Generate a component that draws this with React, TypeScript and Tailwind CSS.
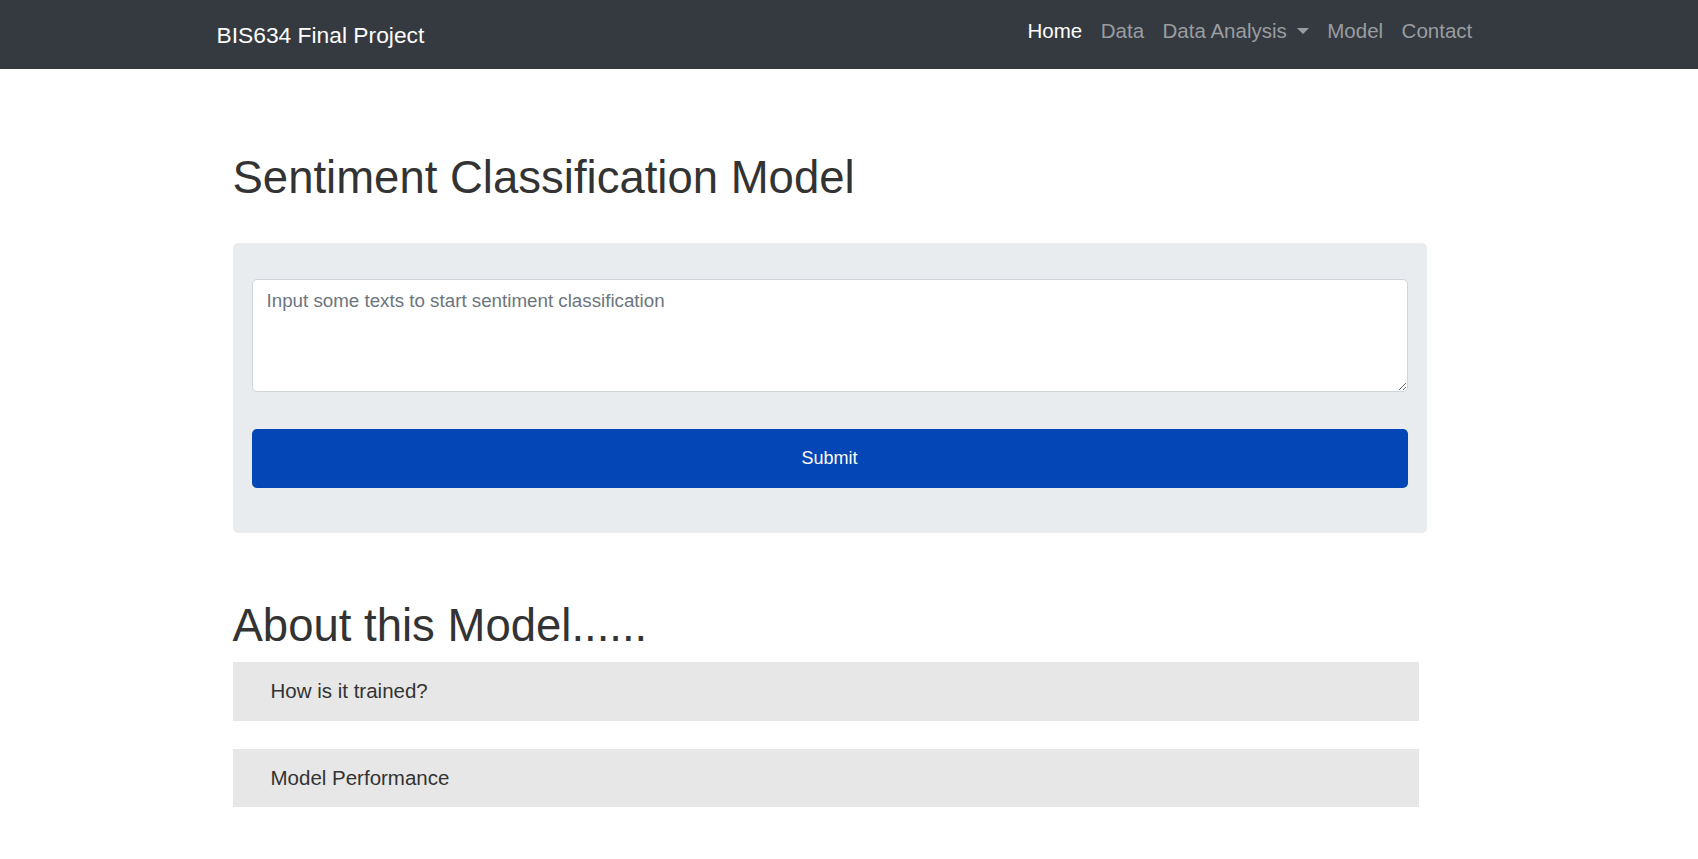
import React from "react";

const navLinks = [
  { label: "Home", active: true },
  { label: "Data" },
  { label: "Data Analysis", dropdown: true },
  { label: "Model" },
  { label: "Contact" },
];

function Navbar() {
  return (
    <nav className="h-[69px] bg-[#343a40]">
      <div className="mx-auto flex h-full w-[1297px] items-center justify-between px-4">
        <a href="#" className="pt-[2px] text-[22.8px] leading-none text-white">
          BIS634 Final Project
        </a>
        <ul className="flex items-center pb-[6px] text-[20.5px] leading-none">
          {navLinks.map((link) => (
            <li key={link.label}>
              <a
                href="#"
                className={
                  link.active
                    ? "flex items-center px-[9.25px] text-white"
                    : "flex items-center px-[9.25px] text-[#9a9da0]"
                }
              >
                {link.label}
                {link.dropdown && (
                  <span className="ml-[10px] mb-[2px] inline-block h-0 w-0 border-x-[6px] border-t-[6px] border-x-transparent border-t-[#9a9da0]" />
                )}
              </a>
            </li>
          ))}
        </ul>
      </div>
    </nav>
  );
}

function AccordionItem({ title, first }: { title: string; first?: boolean }) {
  return (
    <button
      type="button"
      className={
        first
          ? "flex h-[59px] w-full items-center bg-[#e7e7e7] pl-[38px] text-left text-[20.5px] text-[#333]"
          : "mt-[28px] flex h-[58px] w-full items-center bg-[#e7e7e7] pl-[38px] text-left text-[20.5px] text-[#333]"
      }
    >
      {title}
    </button>
  );
}

export default function App() {
  return (
    <div className="min-h-screen bg-white font-['Liberation_Sans',Arial,sans-serif]">
      <Navbar />

      <main className="mx-auto w-[1297px] pb-16 pl-[32px] pt-[82px]">
        <h1 className="text-[45.5px] leading-[1.2] text-[#333]">
          Sentiment Classification Model
        </h1>

        <div className="mt-[37px] w-[1194px] rounded-[5px] bg-[#e9ecef] px-[19px] pb-[45px] pt-[36px]">
          <textarea
            className="block h-[113px] w-full rounded-[5px] border border-[#ced4da] bg-white px-[14px] pt-[7.5px] text-[18.75px] leading-[1.5] text-[#495057] outline-none placeholder:text-[#6c757d]"
            placeholder="Input some texts to start sentiment classification"
          />
          <button
            type="button"
            className="mt-[37px] block h-[59px] w-full rounded-[5px] bg-[#0446b5] text-[18px] text-white"
          >
            Submit
          </button>
        </div>

        <h2 className="mt-[66px] text-[45.5px] leading-[1.2] text-[#333]">
          About this Model......
        </h2>

        <div className="mt-[9px] w-[1186px]">
          <AccordionItem title="How is it trained?" first />
          <AccordionItem title="Model Performance" />
        </div>
      </main>
    </div>
  );
}
